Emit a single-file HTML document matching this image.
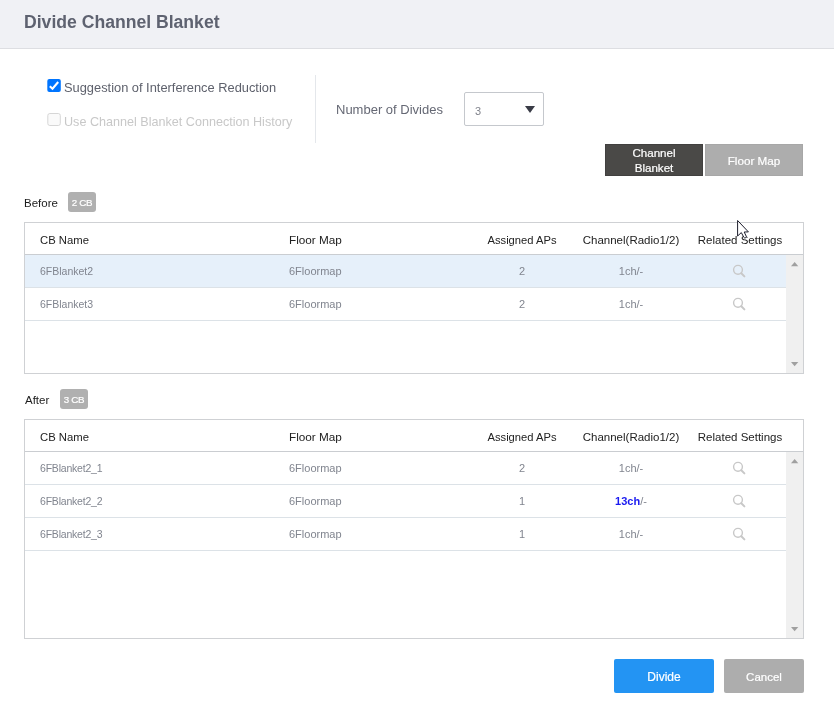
<!DOCTYPE html>
<html><head><meta charset="utf-8"><style>
html,body{margin:0;padding:0;width:834px;height:704px;overflow:hidden;background:#fff;}
body{position:relative;font-family:"Liberation Sans",sans-serif;}
.t{position:absolute;white-space:nowrap;will-change:transform;}
.r{position:absolute;}
.s{display:inline-block;width:0;height:60px;vertical-align:baseline;}
</style></head><body>
<div class="r" style="left:0px;top:0px;width:834px;height:48px;background:#f0f1f5;"></div>
<div class="r" style="left:0px;top:48px;width:834px;height:1px;background:#dddee2;"></div>
<div class="t" style="left:24px;top:-32.00px;font-size:17.6px;line-height:0;color:#5e6270;font-weight:bold;"><i class="s"></i>Divide Channel Blanket</div>
<svg class="r" style="left:47px;top:79px" width="14" height="13" viewBox="0 0 14 13"><rect x="0.3" y="0" width="13.5" height="13" rx="2" fill="#0075ff"/><path d="M2.8 7.2 L5.5 9.7 L11.2 3" fill="none" stroke="#fff" stroke-width="2.1"/></svg>
<svg class="r" style="left:47px;top:113px" width="14" height="13" viewBox="0 0 14 13"><rect x="0.8" y="0.5" width="12.5" height="12" rx="2" fill="#fafafa" stroke="#d6d6d6" stroke-width="1"/></svg>
<div class="t" style="left:64px;top:32.00px;font-size:12.85px;line-height:0;color:#5e616c;font-weight:normal;"><i class="s"></i>Suggestion of Interference Reduction</div>
<div class="t" style="left:64px;top:66.00px;font-size:12.6px;line-height:0;color:#c8c8c8;font-weight:normal;"><i class="s"></i>Use Channel Blanket Connection History</div>
<div class="r" style="left:315px;top:75px;width:1px;height:68px;background:#e4e7eb;"></div>
<div class="t" style="left:336px;top:54.00px;font-size:13px;line-height:0;color:#656874;font-weight:normal;"><i class="s"></i>Number of Divides</div>
<div class="r" style="left:464px;top:92px;width:80px;height:34px;background:#fff;border:1px solid #c5c8cd;box-sizing:border-box;border-radius:2px;"></div>
<div class="t" style="left:475px;top:55.00px;font-size:11px;line-height:0;color:#80838c;font-weight:normal;"><i class="s"></i>3</div>
<svg class="r" style="left:525px;top:106px" width="10" height="7" viewBox="0 0 10 7"><path d="M0 0 H10 L5 7 Z" fill="#393b46"/></svg>
<div class="r" style="left:605px;top:144px;width:98px;height:32px;background:#4a4947;border:1px solid #41403f;box-sizing:border-box;"></div>
<div class="r" style="left:705px;top:144px;width:98px;height:32px;background:#adadad;border:1px solid #a7a7a7;box-sizing:border-box;"></div>
<div class="t" style="left:605.00px;width:98px;text-align:center;top:97.00px;font-size:11.6px;line-height:0;color:#fff;font-weight:normal;-webkit-text-stroke:0.2px #fff;"><i class="s"></i>Channel</div>
<div class="t" style="left:605.00px;width:98px;text-align:center;top:112.00px;font-size:11.6px;line-height:0;color:#fff;font-weight:normal;-webkit-text-stroke:0.2px #fff;"><i class="s"></i>Blanket</div>
<div class="t" style="left:705.00px;width:98px;text-align:center;top:105.00px;font-size:11.7px;line-height:0;color:#fff;font-weight:normal;-webkit-text-stroke:0.2px #fff;"><i class="s"></i>Floor Map</div>
<div class="t" style="left:24px;top:147.00px;font-size:11.5px;line-height:0;color:#1c1c1c;font-weight:normal;"><i class="s"></i>Before</div>
<div class="r" style="left:68px;top:192px;width:28px;height:20px;background:#b0b0b0;border-radius:3px;"></div>
<div class="t" style="left:68.00px;width:28px;text-align:center;top:146.00px;font-size:9.8px;line-height:0;color:#fff;font-weight:normal;-webkit-text-stroke:0.2px #fff;letter-spacing:-0.3px;"><i class="s"></i>2 CB</div>
<div class="r" style="left:24px;top:222px;width:780px;height:152px;background:#fff;border:1px solid #cfd1d4;box-sizing:border-box;"></div>
<div class="r" style="left:25px;top:254px;width:778px;height:1px;background:#cacdd1;"></div>
<div class="t" style="left:40px;top:184.00px;font-size:11.3px;line-height:0;color:#222;font-weight:normal;"><i class="s"></i>CB Name</div>
<div class="t" style="left:288.6px;top:184.00px;font-size:11.75px;line-height:0;color:#222;font-weight:normal;"><i class="s"></i>Floor Map</div>
<div class="t" style="left:462.00px;width:120px;text-align:center;top:184.00px;font-size:11.2px;line-height:0;color:#222;font-weight:normal;"><i class="s"></i>Assigned APs</div>
<div class="t" style="left:560.70px;width:140px;text-align:center;top:184.00px;font-size:11.5px;line-height:0;color:#222;font-weight:normal;"><i class="s"></i>Channel(Radio1/2)</div>
<div class="t" style="left:679.50px;width:120px;text-align:center;top:184.00px;font-size:11.5px;line-height:0;color:#222;font-weight:normal;"><i class="s"></i>Related Settings</div>
<div class="r" style="left:786px;top:255px;width:17px;height:118px;background:#f0f0f0;"></div>
<svg class="r" style="left:790.8px;top:261.9px" width="8" height="5" viewBox="0 0 8 5"><path d="M0 4.2 L3.65 0 L7.3 4.2 Z" fill="#a0a0a0"/></svg>
<svg class="r" style="left:790.8px;top:361.9px" width="8" height="5" viewBox="0 0 8 5"><path d="M0 0 L3.65 4.2 L7.3 0 Z" fill="#a0a0a0"/></svg>
<div class="r" style="left:25px;top:255px;width:761px;height:32px;background:#e6f0fa;"></div>
<div class="r" style="left:25px;top:287px;width:761px;height:1px;background:#dce2e7;"></div>
<div class="t" style="left:40px;top:215.00px;font-size:10.5px;line-height:0;color:#81858f;font-weight:normal;"><i class="s"></i>6FBlanket2</div>
<div class="t" style="left:289px;top:215.00px;font-size:11px;line-height:0;color:#81858f;font-weight:normal;"><i class="s"></i>6Floormap</div>
<div class="t" style="left:491.50px;width:60px;text-align:center;top:215.00px;font-size:11px;line-height:0;color:#81858f;font-weight:normal;"><i class="s"></i>2</div>
<div class="t" style="left:580.70px;width:100px;text-align:center;top:215.00px;font-size:11px;line-height:0;color:#81858f;font-weight:normal;"><i class="s"></i>1ch/-</div>
<svg class="r" style="left:732px;top:264px" width="14" height="14" viewBox="0 0 14 14"><circle cx="6" cy="5.8" r="4.4" fill="none" stroke="#c8c8c8" stroke-width="1.4"/><line x1="9.3" y1="9.2" x2="12.4" y2="12.4" stroke="#c8c8c8" stroke-width="2" stroke-linecap="round"/></svg>
<div class="r" style="left:25px;top:320px;width:761px;height:1px;background:#dce2e7;"></div>
<div class="t" style="left:40px;top:248.00px;font-size:10.5px;line-height:0;color:#81858f;font-weight:normal;"><i class="s"></i>6FBlanket3</div>
<div class="t" style="left:289px;top:248.00px;font-size:11px;line-height:0;color:#81858f;font-weight:normal;"><i class="s"></i>6Floormap</div>
<div class="t" style="left:491.50px;width:60px;text-align:center;top:248.00px;font-size:11px;line-height:0;color:#81858f;font-weight:normal;"><i class="s"></i>2</div>
<div class="t" style="left:580.70px;width:100px;text-align:center;top:248.00px;font-size:11px;line-height:0;color:#81858f;font-weight:normal;"><i class="s"></i>1ch/-</div>
<svg class="r" style="left:732px;top:297px" width="14" height="14" viewBox="0 0 14 14"><circle cx="6" cy="5.8" r="4.4" fill="none" stroke="#c8c8c8" stroke-width="1.4"/><line x1="9.3" y1="9.2" x2="12.4" y2="12.4" stroke="#c8c8c8" stroke-width="2" stroke-linecap="round"/></svg>
<div class="t" style="left:25px;top:344.00px;font-size:11.5px;line-height:0;color:#1c1c1c;font-weight:normal;"><i class="s"></i>After</div>
<div class="r" style="left:60px;top:389px;width:28px;height:20px;background:#b0b0b0;border-radius:3px;"></div>
<div class="t" style="left:60.00px;width:28px;text-align:center;top:343.00px;font-size:9.8px;line-height:0;color:#fff;font-weight:normal;-webkit-text-stroke:0.2px #fff;letter-spacing:-0.3px;"><i class="s"></i>3 CB</div>
<div class="r" style="left:24px;top:419px;width:780px;height:220px;background:#fff;border:1px solid #cfd1d4;box-sizing:border-box;"></div>
<div class="r" style="left:25px;top:451px;width:778px;height:1px;background:#cacdd1;"></div>
<div class="t" style="left:40px;top:381.00px;font-size:11.3px;line-height:0;color:#222;font-weight:normal;"><i class="s"></i>CB Name</div>
<div class="t" style="left:288.6px;top:381.00px;font-size:11.75px;line-height:0;color:#222;font-weight:normal;"><i class="s"></i>Floor Map</div>
<div class="t" style="left:462.00px;width:120px;text-align:center;top:381.00px;font-size:11.2px;line-height:0;color:#222;font-weight:normal;"><i class="s"></i>Assigned APs</div>
<div class="t" style="left:560.70px;width:140px;text-align:center;top:381.00px;font-size:11.5px;line-height:0;color:#222;font-weight:normal;"><i class="s"></i>Channel(Radio1/2)</div>
<div class="t" style="left:679.50px;width:120px;text-align:center;top:381.00px;font-size:11.5px;line-height:0;color:#222;font-weight:normal;"><i class="s"></i>Related Settings</div>
<div class="r" style="left:786px;top:452px;width:17px;height:186px;background:#f0f0f0;"></div>
<svg class="r" style="left:790.8px;top:458.9px" width="8" height="5" viewBox="0 0 8 5"><path d="M0 4.2 L3.65 0 L7.3 4.2 Z" fill="#a0a0a0"/></svg>
<svg class="r" style="left:790.8px;top:626.9px" width="8" height="5" viewBox="0 0 8 5"><path d="M0 0 L3.65 4.2 L7.3 0 Z" fill="#a0a0a0"/></svg>
<div class="r" style="left:25px;top:484px;width:761px;height:1px;background:#dce2e7;"></div>
<div class="t" style="left:40px;top:412.00px;font-size:10.5px;line-height:0;color:#81858f;font-weight:normal;letter-spacing:-0.2px;"><i class="s"></i>6FBlanket2_1</div>
<div class="t" style="left:289px;top:412.00px;font-size:11px;line-height:0;color:#81858f;font-weight:normal;"><i class="s"></i>6Floormap</div>
<div class="t" style="left:491.50px;width:60px;text-align:center;top:412.00px;font-size:11px;line-height:0;color:#81858f;font-weight:normal;"><i class="s"></i>2</div>
<div class="t" style="left:580.70px;width:100px;text-align:center;top:412.00px;font-size:11px;line-height:0;color:#81858f;font-weight:normal;"><i class="s"></i>1ch/-</div>
<svg class="r" style="left:732px;top:461px" width="14" height="14" viewBox="0 0 14 14"><circle cx="6" cy="5.8" r="4.4" fill="none" stroke="#c8c8c8" stroke-width="1.4"/><line x1="9.3" y1="9.2" x2="12.4" y2="12.4" stroke="#c8c8c8" stroke-width="2" stroke-linecap="round"/></svg>
<div class="r" style="left:25px;top:517px;width:761px;height:1px;background:#dce2e7;"></div>
<div class="t" style="left:40px;top:445.00px;font-size:10.5px;line-height:0;color:#81858f;font-weight:normal;letter-spacing:-0.2px;"><i class="s"></i>6FBlanket2_2</div>
<div class="t" style="left:289px;top:445.00px;font-size:11px;line-height:0;color:#81858f;font-weight:normal;"><i class="s"></i>6Floormap</div>
<div class="t" style="left:491.50px;width:60px;text-align:center;top:445.00px;font-size:11px;line-height:0;color:#81858f;font-weight:normal;"><i class="s"></i>1</div>
<div class="t" style="left:580.70px;width:100px;text-align:center;top:445.00px;font-size:11px;line-height:0;color:#81858f;font-weight:normal;"><i class="s"></i><b style="color:#1a1af0">13ch</b>/-</div>
<svg class="r" style="left:732px;top:494px" width="14" height="14" viewBox="0 0 14 14"><circle cx="6" cy="5.8" r="4.4" fill="none" stroke="#c8c8c8" stroke-width="1.4"/><line x1="9.3" y1="9.2" x2="12.4" y2="12.4" stroke="#c8c8c8" stroke-width="2" stroke-linecap="round"/></svg>
<div class="r" style="left:25px;top:550px;width:761px;height:1px;background:#dce2e7;"></div>
<div class="t" style="left:40px;top:478.00px;font-size:10.5px;line-height:0;color:#81858f;font-weight:normal;letter-spacing:-0.2px;"><i class="s"></i>6FBlanket2_3</div>
<div class="t" style="left:289px;top:478.00px;font-size:11px;line-height:0;color:#81858f;font-weight:normal;"><i class="s"></i>6Floormap</div>
<div class="t" style="left:491.50px;width:60px;text-align:center;top:478.00px;font-size:11px;line-height:0;color:#81858f;font-weight:normal;"><i class="s"></i>1</div>
<div class="t" style="left:580.70px;width:100px;text-align:center;top:478.00px;font-size:11px;line-height:0;color:#81858f;font-weight:normal;"><i class="s"></i>1ch/-</div>
<svg class="r" style="left:732px;top:527px" width="14" height="14" viewBox="0 0 14 14"><circle cx="6" cy="5.8" r="4.4" fill="none" stroke="#c8c8c8" stroke-width="1.4"/><line x1="9.3" y1="9.2" x2="12.4" y2="12.4" stroke="#c8c8c8" stroke-width="2" stroke-linecap="round"/></svg>
<div class="r" style="left:614px;top:659px;width:100px;height:34px;background:#2394f3;border-radius:2px;"></div>
<div class="r" style="left:724px;top:659px;width:80px;height:34px;background:#adadad;border-radius:2px;"></div>
<div class="t" style="left:614.00px;width:100px;text-align:center;top:621.00px;font-size:12px;line-height:0;color:#fff;font-weight:normal;-webkit-text-stroke:0.2px #fff;"><i class="s"></i>Divide</div>
<div class="t" style="left:724.00px;width:80px;text-align:center;top:621.00px;font-size:11.5px;line-height:0;color:#fff;font-weight:normal;-webkit-text-stroke:0.2px #fff;"><i class="s"></i>Cancel</div>
<svg class="r" style="left:736px;top:219px" width="16" height="22" viewBox="0 0 16 22"><path d="M1.6 1.5 L1.6 17 L5.3 13.6 L7.9 18.4 Q8.5 19.2 9.4 18.8 L10 18.5 Q10.6 18.1 10.3 17.4 L8.2 13 L12.4 12.9 Z" fill="#fff" stroke="#1b1d2c" stroke-width="1.0" stroke-linejoin="round"/></svg>
</body></html>
